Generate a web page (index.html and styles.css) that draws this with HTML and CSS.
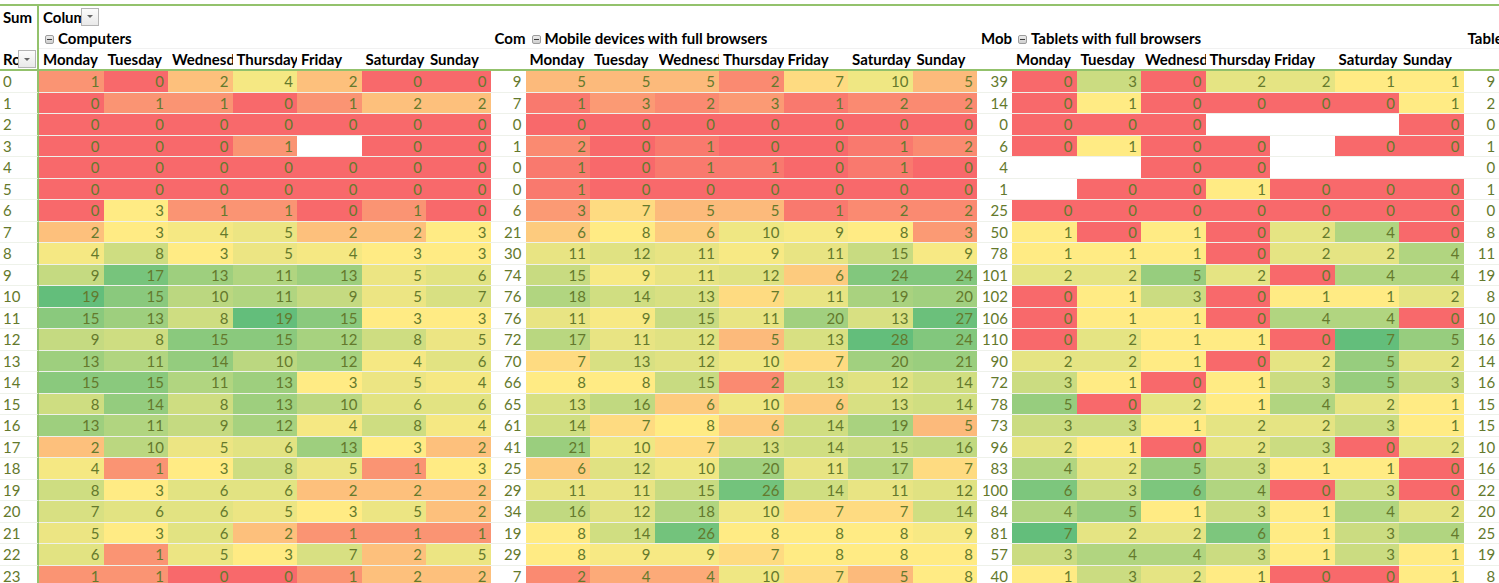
FILE: index.html
```html
<!DOCTYPE html>
<html lang="en">
<head>
<meta charset="utf-8">
<title>Visits pivot</title>
<link rel="stylesheet" href="styles.css">
</head>
<body>
<div class="sheet">
<table class="pivot">
<colgroup>
<col class="c-lbl"><col class="c-day" span="7"><col class="c-tot"><col class="c-day" span="7"><col class="c-tot"><col class="c-day" span="7"><col class="c-last">
</colgroup>
<thead>
<tr class="h1">
<th class="lbl"><div class="cellbox"><span class="clip">Sum</span></div></th>
<th><div class="cellbox"><span class="clip">Column</span><span class="dd"></span></div></th>
<th colspan="23"></th>
</tr>
<tr class="h2">
<th class="lbl"></th>
<th colspan="7" class="grp"><span class="tog"></span>Computers</th>
<th class="gt">Com</th>
<th colspan="7" class="grp"><span class="tog"></span>Mobile devices with full browsers</th>
<th class="gt">Mob</th>
<th colspan="7" class="grp"><span class="tog"></span>Tablets with full browsers</th>
<th class="gt">Table</th>
</tr>
<tr class="h3">
<th class="lbl"><div class="cellbox"><span class="clip">Row</span><span class="dd"></span></div></th>
<th>Monday</th><th>Tuesday</th><th><span class="clip">Wednesday</span></th><th>Thursday</th><th>Friday</th><th>Saturday</th><th>Sunday</th><th></th>
<th>Monday</th><th>Tuesday</th><th><span class="clip">Wednesday</span></th><th>Thursday</th><th>Friday</th><th>Saturday</th><th>Sunday</th><th></th>
<th>Monday</th><th>Tuesday</th><th><span class="clip">Wednesday</span></th><th>Thursday</th><th>Friday</th><th>Saturday</th><th>Sunday</th><th></th>
</tr>
</thead>
<tbody>
<tr><th>0</th><td>1</td><td>0</td><td>2</td><td>4</td><td>2</td><td>0</td><td>0</td><td class="t">9</td><td>5</td><td>5</td><td>5</td><td>2</td><td>7</td><td>10</td><td>5</td><td class="t">39</td><td>0</td><td>3</td><td>0</td><td>2</td><td>2</td><td>1</td><td>1</td><td class="t">9</td></tr>
<tr><th>1</th><td>0</td><td>1</td><td>1</td><td>0</td><td>1</td><td>2</td><td>2</td><td class="t">7</td><td>1</td><td>3</td><td>2</td><td>3</td><td>1</td><td>2</td><td>2</td><td class="t">14</td><td>0</td><td>1</td><td>0</td><td>0</td><td>0</td><td>0</td><td>1</td><td class="t">2</td></tr>
<tr><th>2</th><td>0</td><td>0</td><td>0</td><td>0</td><td>0</td><td>0</td><td>0</td><td class="t">0</td><td>0</td><td>0</td><td>0</td><td>0</td><td>0</td><td>0</td><td>0</td><td class="t">0</td><td>0</td><td>0</td><td>0</td><td></td><td></td><td></td><td>0</td><td class="t">0</td></tr>
<tr><th>3</th><td>0</td><td>0</td><td>0</td><td>1</td><td></td><td>0</td><td>0</td><td class="t">1</td><td>2</td><td>0</td><td>1</td><td>0</td><td>0</td><td>1</td><td>2</td><td class="t">6</td><td>0</td><td>1</td><td>0</td><td>0</td><td></td><td>0</td><td>0</td><td class="t">1</td></tr>
<tr><th>4</th><td>0</td><td>0</td><td>0</td><td>0</td><td>0</td><td>0</td><td>0</td><td class="t">0</td><td>1</td><td>0</td><td>1</td><td>1</td><td>0</td><td>1</td><td>0</td><td class="t">4</td><td></td><td></td><td>0</td><td>0</td><td></td><td></td><td></td><td class="t">0</td></tr>
<tr><th>5</th><td>0</td><td>0</td><td>0</td><td>0</td><td>0</td><td>0</td><td>0</td><td class="t">0</td><td>1</td><td>0</td><td>0</td><td>0</td><td>0</td><td>0</td><td>0</td><td class="t">1</td><td></td><td>0</td><td>0</td><td>1</td><td>0</td><td>0</td><td>0</td><td class="t">1</td></tr>
<tr><th>6</th><td>0</td><td>3</td><td>1</td><td>1</td><td>0</td><td>1</td><td>0</td><td class="t">6</td><td>3</td><td>7</td><td>5</td><td>5</td><td>1</td><td>2</td><td>2</td><td class="t">25</td><td>0</td><td>0</td><td>0</td><td>0</td><td>0</td><td>0</td><td>0</td><td class="t">0</td></tr>
<tr><th>7</th><td>2</td><td>3</td><td>4</td><td>5</td><td>2</td><td>2</td><td>3</td><td class="t">21</td><td>6</td><td>8</td><td>6</td><td>10</td><td>9</td><td>8</td><td>3</td><td class="t">50</td><td>1</td><td>0</td><td>1</td><td>0</td><td>2</td><td>4</td><td>0</td><td class="t">8</td></tr>
<tr><th>8</th><td>4</td><td>8</td><td>3</td><td>5</td><td>4</td><td>3</td><td>3</td><td class="t">30</td><td>11</td><td>12</td><td>11</td><td>9</td><td>11</td><td>15</td><td>9</td><td class="t">78</td><td>1</td><td>1</td><td>1</td><td>0</td><td>2</td><td>2</td><td>4</td><td class="t">11</td></tr>
<tr><th>9</th><td>9</td><td>17</td><td>13</td><td>11</td><td>13</td><td>5</td><td>6</td><td class="t">74</td><td>15</td><td>9</td><td>11</td><td>12</td><td>6</td><td>24</td><td>24</td><td class="t">101</td><td>2</td><td>2</td><td>5</td><td>2</td><td>0</td><td>4</td><td>4</td><td class="t">19</td></tr>
<tr><th>10</th><td>19</td><td>15</td><td>10</td><td>11</td><td>9</td><td>5</td><td>7</td><td class="t">76</td><td>18</td><td>14</td><td>13</td><td>7</td><td>11</td><td>19</td><td>20</td><td class="t">102</td><td>0</td><td>1</td><td>3</td><td>0</td><td>1</td><td>1</td><td>2</td><td class="t">8</td></tr>
<tr><th>11</th><td>15</td><td>13</td><td>8</td><td>19</td><td>15</td><td>3</td><td>3</td><td class="t">76</td><td>11</td><td>9</td><td>15</td><td>11</td><td>20</td><td>13</td><td>27</td><td class="t">106</td><td>0</td><td>1</td><td>1</td><td>0</td><td>4</td><td>4</td><td>0</td><td class="t">10</td></tr>
<tr><th>12</th><td>9</td><td>8</td><td>15</td><td>15</td><td>12</td><td>8</td><td>5</td><td class="t">72</td><td>17</td><td>11</td><td>12</td><td>5</td><td>13</td><td>28</td><td>24</td><td class="t">110</td><td>0</td><td>2</td><td>1</td><td>1</td><td>0</td><td>7</td><td>5</td><td class="t">16</td></tr>
<tr><th>13</th><td>13</td><td>11</td><td>14</td><td>10</td><td>12</td><td>4</td><td>6</td><td class="t">70</td><td>7</td><td>13</td><td>12</td><td>10</td><td>7</td><td>20</td><td>21</td><td class="t">90</td><td>2</td><td>2</td><td>1</td><td>0</td><td>2</td><td>5</td><td>2</td><td class="t">14</td></tr>
<tr><th>14</th><td>15</td><td>15</td><td>11</td><td>13</td><td>3</td><td>5</td><td>4</td><td class="t">66</td><td>8</td><td>8</td><td>15</td><td>2</td><td>13</td><td>12</td><td>14</td><td class="t">72</td><td>3</td><td>1</td><td>0</td><td>1</td><td>3</td><td>5</td><td>3</td><td class="t">16</td></tr>
<tr><th>15</th><td>8</td><td>14</td><td>8</td><td>13</td><td>10</td><td>6</td><td>6</td><td class="t">65</td><td>13</td><td>16</td><td>6</td><td>10</td><td>6</td><td>13</td><td>14</td><td class="t">78</td><td>5</td><td>0</td><td>2</td><td>1</td><td>4</td><td>2</td><td>1</td><td class="t">15</td></tr>
<tr><th>16</th><td>13</td><td>11</td><td>9</td><td>12</td><td>4</td><td>8</td><td>4</td><td class="t">61</td><td>14</td><td>7</td><td>8</td><td>6</td><td>14</td><td>19</td><td>5</td><td class="t">73</td><td>3</td><td>3</td><td>1</td><td>2</td><td>2</td><td>3</td><td>1</td><td class="t">15</td></tr>
<tr><th>17</th><td>2</td><td>10</td><td>5</td><td>6</td><td>13</td><td>3</td><td>2</td><td class="t">41</td><td>21</td><td>10</td><td>7</td><td>13</td><td>14</td><td>15</td><td>16</td><td class="t">96</td><td>2</td><td>1</td><td>0</td><td>2</td><td>3</td><td>0</td><td>2</td><td class="t">10</td></tr>
<tr><th>18</th><td>4</td><td>1</td><td>3</td><td>8</td><td>5</td><td>1</td><td>3</td><td class="t">25</td><td>6</td><td>12</td><td>10</td><td>20</td><td>11</td><td>17</td><td>7</td><td class="t">83</td><td>4</td><td>2</td><td>5</td><td>3</td><td>1</td><td>1</td><td>0</td><td class="t">16</td></tr>
<tr><th>19</th><td>8</td><td>3</td><td>6</td><td>6</td><td>2</td><td>2</td><td>2</td><td class="t">29</td><td>11</td><td>11</td><td>15</td><td>26</td><td>14</td><td>11</td><td>12</td><td class="t">100</td><td>6</td><td>3</td><td>6</td><td>4</td><td>0</td><td>3</td><td>0</td><td class="t">22</td></tr>
<tr><th>20</th><td>7</td><td>6</td><td>6</td><td>5</td><td>3</td><td>5</td><td>2</td><td class="t">34</td><td>16</td><td>12</td><td>18</td><td>10</td><td>7</td><td>7</td><td>14</td><td class="t">84</td><td>4</td><td>5</td><td>1</td><td>3</td><td>1</td><td>4</td><td>2</td><td class="t">20</td></tr>
<tr><th>21</th><td>5</td><td>3</td><td>6</td><td>2</td><td>1</td><td>1</td><td>1</td><td class="t">19</td><td>8</td><td>14</td><td>26</td><td>8</td><td>8</td><td>8</td><td>9</td><td class="t">81</td><td>7</td><td>2</td><td>2</td><td>6</td><td>1</td><td>3</td><td>4</td><td class="t">25</td></tr>
<tr><th>22</th><td>6</td><td>1</td><td>5</td><td>3</td><td>7</td><td>2</td><td>5</td><td class="t">29</td><td>8</td><td>9</td><td>9</td><td>7</td><td>8</td><td>8</td><td>8</td><td class="t">57</td><td>3</td><td>4</td><td>4</td><td>3</td><td>1</td><td>3</td><td>1</td><td class="t">19</td></tr>
<tr><th>23</th><td>1</td><td>1</td><td>0</td><td>0</td><td>1</td><td>2</td><td>2</td><td class="t">7</td><td>2</td><td>4</td><td>4</td><td>10</td><td>7</td><td>5</td><td>8</td><td class="t">40</td><td>1</td><td>3</td><td>2</td><td>1</td><td>0</td><td>0</td><td>1</td><td class="t">8</td></tr>
</tbody>
</table>
</div>
<script src="script.js"></script>
</body>
</html>
```

FILE: styles.css
```css
* { box-sizing: border-box; }
html, body { margin: 0; padding: 0; background: #fff; }
body { overflow: hidden; font-family: Lato, "Open Sans", "Liberation Sans", sans-serif; font-size: 15px; color: #000; }
.sheet { width: 1499px; height: 583px; overflow: hidden; padding-top: 4px; }

.pivot { border-collapse: separate; border-spacing: 0; table-layout: fixed; width: 1499px; }
.c-lbl { width: 39px; }
.c-day { width: 64.5px; }
.c-tot { width: 35px; }
.c-last { width: 35.5px; }

.pivot th, .pivot td { padding: 0 4px; overflow: hidden; white-space: nowrap; line-height: 18px; }

.pivot thead th { text-align: left; font-weight: 700; vertical-align: middle; }
.pivot thead th > .clip { display: block; overflow: hidden; margin-right: -4px; }
.pivot .h1 { height: 23.5px; }
.pivot .h2 { height: 21.5px; }
.pivot .h3 { height: 22px; }
.pivot .h1 th { border-top: 2px solid #93c26c; }
.pivot .h3 th { border-bottom: 2px solid #93c26c; }
.pivot .lbl { border-right: 2px solid #93c26c; padding-left: 3px; padding-right: 0; }
.pivot .h2 .grp { padding-left: 6px; border-bottom: 1px solid #f1f1f1; }
.pivot .h2 .gt { border-bottom: 1px solid #f1f1f1; }

.cellbox { display: flex; align-items: center; }
.clip { flex: 1 1 auto; min-width: 0; overflow: hidden; white-space: nowrap; }
.dd { flex: 0 0 auto; width: 18px; height: 18px; margin-right: 1px; border: 1px solid #b4b4b4; background: linear-gradient(#fcfcfc, #e9e9e9); display: flex; align-items: center; justify-content: center; }
.dd::after { content: ""; border-left: 3px solid transparent; border-right: 3px solid transparent; border-top: 3px solid #666; }

.tog { display: inline-block; width: 9px; height: 9px; margin-right: 4px; vertical-align: -0.5px; border: 1px solid #9c9c9c; border-radius: 2px; background: linear-gradient(#ececec, #cfcfcf); position: relative; }
.tog::after { content: ""; position: absolute; left: 1px; right: 1px; top: 3px; height: 1px; background: #3c3c3c; }

.pivot tbody tr { height: 21.5px; }
.pivot tbody th { font-weight: 400; text-align: left; color: #64792c; padding-left: 3px; border-right: 2px solid #93c26c; border-bottom: 1px solid #eef2ea; }
.pivot tbody td { text-align: right; color: #64792c; padding: 0 4px 0 0; border-bottom: 1px solid #eef1ea; }
.pivot tbody td.t { background: #fff; }
```

FILE: script.js
```js
(function () {
  var RED = [248, 105, 107], YEL = [255, 235, 132], GRN = [99, 190, 123];
  function mix(a, b, t) {
    return a.map(function (x, i) { return Math.round(x + (b[i] - x) * t); });
  }
  function scale(v, min, mid, max) {
    var c;
    if (v <= mid) c = mid === min ? YEL : mix(RED, YEL, (v - min) / (mid - min));
    else c = mix(YEL, GRN, (v - mid) / (max - mid));
    return 'rgb(' + c.join(',') + ')';
  }
  var groups = [[], [], []];
  document.querySelectorAll('.pivot tbody tr').forEach(function (tr) {
    tr.querySelectorAll('td').forEach(function (td, i) {
      var g = Math.floor(i / 8), p = i % 8;
      if (p === 7) return;
      var t = td.textContent.trim();
      if (t === '') return;
      groups[g].push({ td: td, v: Number(t) });
    });
  });
  groups.forEach(function (list) {
    var vals = list.map(function (o) { return o.v; }).sort(function (a, b) { return a - b; });
    var n = vals.length, pos = (n - 1) * 0.5, lo = Math.floor(pos), hi = Math.ceil(pos);
    var mid = vals[lo] + (vals[hi] - vals[lo]) * (pos - lo);
    var min = vals[0], max = vals[n - 1];
    list.forEach(function (o) { o.td.style.backgroundColor = scale(o.v, min, mid, max); });
  });
})();
```
